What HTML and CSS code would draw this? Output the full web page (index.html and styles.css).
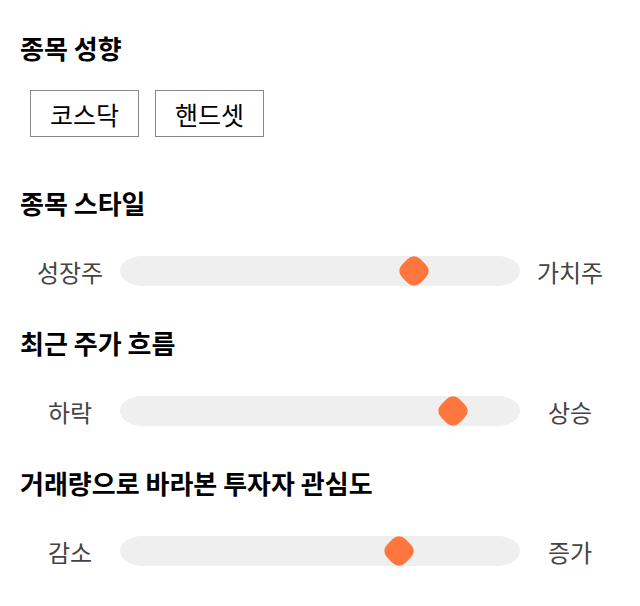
FILE: index.html
```html
<!DOCTYPE html>
<html>
<head lang="ko">
    <meta charset="UTF-8">
    <title>종목 성향</title>
    <link rel="stylesheet" href="styles.css">
</head>
<body>
<div class="panel">
    <h2 class="title">종목 성향</h2>
    <ul class="tags">
        <li class="tag">코스닥</li>
        <li class="tag">핸드셋</li>
    </ul>

    <h2 class="title title_gap">종목 스타일</h2>
    <div class="range">
        <span class="range_label">성장주</span>
        <div class="range_track">
            <span class="range_thumb" style="left: 73.5%"></span>
        </div>
        <span class="range_label">가치주</span>
    </div>

    <h2 class="title">최근 주가 흐름</h2>
    <div class="range">
        <span class="range_label">하락</span>
        <div class="range_track">
            <span class="range_thumb" style="left: 83.3%"></span>
        </div>
        <span class="range_label">상승</span>
    </div>

    <h2 class="title">거래량으로 바라본 투자자 관심도</h2>
    <div class="range">
        <span class="range_label">감소</span>
        <div class="range_track">
            <span class="range_thumb" style="left: 69.8%"></span>
        </div>
        <span class="range_label">증가</span>
    </div>
</div>
</body>
</html>
```

FILE: styles.css
```css
body,div,ul,li,h2{ margin:0; padding:0;}
ul{ list-style:none;}

body{
    background-color: #ffffff;
    font-family: "Noto Sans CJK KR", "Noto Sans", sans-serif;
    color: #000000;
}

.panel{
    width: 600px;
    padding: 31px 20px 0;
}

.title{
    font-size: 26px;
    font-weight: bold;
    line-height: 34px;
    margin-top: 35px;
}
.panel .title:first-child{
    margin-top: 0;
}
.panel .title_gap{
    margin-top: 49px;
}

.tags{
    display: flex;
    gap: 16px;
    margin-top: 25px;
    padding-left: 10px;
}
.tag{
    width: 107px;
    height: 45px;
    border: 1px solid #888888;
    display: flex;
    align-items: center;
    justify-content: center;
    font-size: 25px;
}

.range{
    display: flex;
    align-items: center;
    height: 40px;
    margin-top: 31px;
}
.range_label{
    width: 100px;
    text-align: center;
    font-size: 24px;
    color: #444444;
}
.range_track{
    position: relative;
    width: 400px;
    height: 30px;
    background-color: #efefef;
    border-radius: 22px / 15px;
}
.range_thumb{
    position: absolute;
    top: 50%;
    width: 26px;
    height: 26px;
    margin: -13px 0 0 -13px;
    background-color: #ff773f;
    border-radius: 9px;
    transform: rotate(45deg);
}
```
